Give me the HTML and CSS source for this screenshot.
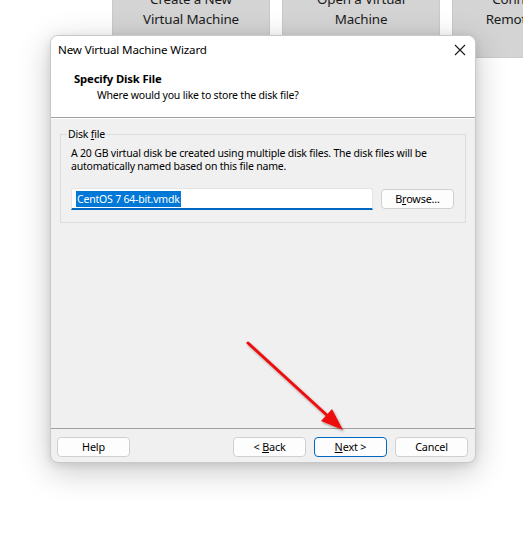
FILE: index.html
```html
<!DOCTYPE html>
<html>
<head>
<meta charset="utf-8">
<link rel="stylesheet" href="styles.css">
</head>
<body>
<div class="desktop">
  <div class="tiles">
    <div class="tile"><span>Create a New</span><span>Virtual Machine</span></div>
    <div class="tile"><span>Open a Virtual</span><span>Machine</span></div>
    <div class="tile"><span>Connect to a</span><span>Remote Server</span></div>
  </div>

  <div class="dialog">
    <div class="titlebar">
      <span class="title">New Virtual Machine Wizard</span>
      <svg class="close" width="12" height="12" viewBox="0 0 12 12"><path d="M1 1 L11 11 M11 1 L1 11" stroke="#1a1a1a" stroke-width="1.1" fill="none"/></svg>
    </div>
    <div class="header">
      <div class="h-title">Specify Disk File</div>
      <div class="h-sub">Where would you like to store the disk file?</div>
    </div>
    <div class="body">
      <fieldset class="group">
        <legend>Disk <u>f</u>ile</legend>
        <p class="desc">A 20 GB virtual disk be created using multiple disk files. The disk files will be<br>automatically named based on this file name.</p>
        <div class="filerow">
          <div class="input"><span class="sel">CentOS 7 64-bit.vmdk</span></div>
          <button class="btn browse">B<u>r</u>owse...</button>
        </div>
      </fieldset>
    </div>
    <div class="footer">
      <button class="btn">Help</button>
      <div class="spacer"></div>
      <button class="btn">&lt; <u>B</u>ack</button>
      <button class="btn primary"><u>N</u>ext &gt;</button>
      <button class="btn">Cancel</button>
    </div>
  </div>

  <svg class="arrow" width="523" height="543" viewBox="0 0 523 543">
    <defs>
      <filter id="sh" x="-20%" y="-20%" width="140%" height="140%">
        <feDropShadow dx="1" dy="1.5" stdDeviation="1.2" flood-color="#000" flood-opacity="0.35"/>
      </filter>
    </defs>
    <g filter="url(#sh)">
      <line x1="248" y1="343" x2="330" y2="418" stroke="#ee1111" stroke-width="3" stroke-linecap="round"/>
      <polygon points="343,430 321,421 332,409" fill="#ee1111"/>
    </g>
  </svg>
</div>
</body>
</html>
```

FILE: styles.css
```css
* { box-sizing: border-box; }
html, body {
  margin: 0;
  padding: 0;
  background: #ffffff;
  font-family: "Noto Sans", "Open Sans", sans-serif;
  font-size: 10.5px;
  letter-spacing: -0.2px;
  color: #000;
}
.desktop {
  position: relative;
  width: 523px;
  height: 543px;
  overflow: hidden;
}
.tiles {
  display: flex;
  gap: 12px;
  padding-left: 112px;
  margin-top: -20px;
}
.tile {
  width: 158px;
  height: 78px;
  flex-shrink: 0;
  background: #d4d4d4;
  border: 1px solid #cacaca;
  border-top: none;
  display: flex;
  flex-direction: column;
  align-items: center;
  padding-top: 10px;
  font-size: 13.4px;
  letter-spacing: -0.15px;
  line-height: 19.5px;
  color: #1a1a1a;
}
.dialog {
  position: absolute;
  left: 50px;
  top: 35px;
  width: 426px;
  height: 428px;
  background: #f0f0f0;
  border: 1px solid #c9c9c9;
  border-radius: 8px;
  overflow: hidden;
  box-shadow: 0 8px 32px rgba(0,0,0,0.22), 0 2px 8px rgba(0,0,0,0.10);
  display: flex;
  flex-direction: column;
}
.titlebar {
  background: #fff;
  height: 29px;
  display: flex;
  align-items: center;
  padding-left: 7px;
  padding-right: 9px;
  padding-bottom: 2px;
  font-size: 11.6px;
  letter-spacing: -0.15px;
}
.title {
  flex: 1;
  color: #000;
}
.close { display: block; }
.header {
  background: #fff;
  height: 53px;
  padding-left: 23px;
  padding-top: 6px;
  border-bottom: 1px solid #a0a0a0;
  box-shadow: 0 1px 0 #ffffff;
}
.h-title {
  font-weight: bold;
  font-size: 11.3px;
  letter-spacing: -0.15px;
  line-height: 16px;
}
.h-sub {
  padding-left: 23px;
  line-height: 17px;
}
.body {
  flex: 1;
  padding: 9px 9px 0 9px;
}
.group {
  margin: 0;
  border: 1px solid #dcdcdc;
  padding: 0 11px 12px 10px;
  height: 96px;
}
.group legend {
  padding: 0 1px;
  margin-left: -4px;
  line-height: 14px;
}
.desc {
  margin: 6px 0 0 0;
  line-height: 13px;
  white-space: nowrap;
}
.filerow {
  display: flex;
  align-items: center;
  gap: 8px;
  margin-top: 15px;
}
.input {
  width: 302px;
  height: 22px;
  background: #fff;
  border: 1px solid #e4e4e4;
  border-bottom: 2px solid #0067c0;
  border-radius: 3px 3px 0 0;
  padding-left: 4px;
  display: flex;
  align-items: center;
}
.sel {
  background: #0078d7;
  color: #fff;
  line-height: 16px;
  padding: 0 1px;
}
.btn {
  font-family: inherit;
  font-size: 10.8px;
  letter-spacing: -0.15px;
  width: 73px;
  height: 20px;
  background: #fdfdfd;
  border: 1px solid #d0d0d0;
  border-radius: 4px;
  padding: 0;
  color: #000;
  line-height: 16px;
}
.btn u { text-decoration-thickness: 1px; }
.browse { width: 73px; }
.footer {
  border-top: 1px solid #a0a0a0;
  height: 34px;
  display: flex;
  align-items: flex-start;
  gap: 8px;
  padding: 8px 7px 0 6px;
}
.spacer { flex: 1; }
.primary {
  border: 1px solid #0067c0;
}
.arrow {
  position: absolute;
  left: 0;
  top: 0;
  pointer-events: none;
}
```
